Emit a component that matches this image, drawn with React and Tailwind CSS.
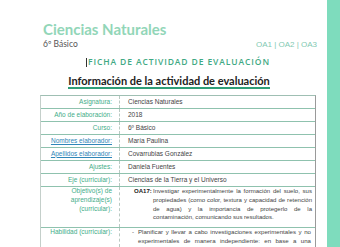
import React from 'react'

const rows = [
  { label: 'Asignatura:', value: 'Ciencias Naturales' },
  { label: 'Año de elaboración:', value: '2018' },
  { label: 'Curso:', value: '6º Básico' },
  { label: 'Nombres elaborador:', value: 'María Paulina', link: true },
  { label: 'Apellidos elaborador:', value: 'Covarrubias González', link: true },
  { label: 'Ajustes:', value: 'Daniela Fuentes' },
  { label: 'Eje (curricular):', value: 'Ciencias de la Tierra y el Universo' },
]

function Label({ children, link }) {
  return (
    <div className="flex items-center justify-end pr-[7px] border-r border-dashed border-[#b9c9c2] text-right">
      <span className={link ? 'text-[#2f86b8] underline' : 'text-[#44ad88]'}>{children}</span>
    </div>
  )
}

export default function App() {
  return (
    <div className="flex w-[340px] h-[247px] overflow-hidden bg-white" style={{ fontFamily: '"Liberation Sans", Arial, sans-serif' }}>
      <div className="flex-1 flex flex-col">
        {/* header */}
        <div className="pl-[43px] pr-[10px] pt-[20px]">
          <div className="text-[15px] leading-[18px] font-bold text-[#92d6b8]" style={{ fontFamily: 'Lato, sans-serif' }}>
            Ciencias Naturales
          </div>
          <div className="flex items-center justify-between mt-[1px] h-[11px]">
            <span className="text-[8.5px] leading-[11px] text-[#555]" style={{ fontFamily: 'Lato, sans-serif' }}>6º Básico</span>
            <span className="text-[8px] leading-[11px] text-[#7fc9b2]">OA1 | OA2 | OA3</span>
          </div>
        </div>

        <div className="flex items-center pl-[86px] mt-[7px] h-[10px]">
          <span className="w-px h-[9px] bg-[#333] mr-[1px]"></span>
          <span className="text-[8.5px] leading-[10px] tracking-[0.9px] font-semibold text-[#3fa984]" style={{ fontFamily: '"Open Sans", sans-serif' }}>
            FICHA DE ACTIVIDAD DE EVALUACIÓN
          </span>
        </div>

        <div className="ml-[68px] mt-[7px] w-[202px] border-b-2 border-[#2f9e78] text-center">
          <div className="text-[11px] leading-[13px] font-bold text-[#222]" style={{ fontFamily: 'Lato, sans-serif' }}>
            Información de la actividad de evaluación
          </div>
        </div>

        {/* table */}
        <div className="ml-[40px] mt-[6px] w-[276px] border-t border-[#9fbfb3] border-l border-l-[#c4cfca] border-l-dashed border-r border-r-[#9a9a9a] text-[6.5px] leading-[8.8px] text-[#444]">
          {rows.map((r) => (
            <div key={r.label} className="grid grid-cols-[79px_1fr] h-[13px] border-b border-[#8fc2ae]">
              <Label link={r.link}>{r.label}</Label>
              <div className="flex items-center pl-[8px]">{r.value}</div>
            </div>
          ))}
          <div className="grid grid-cols-[79px_1fr] h-[41px] border-b border-[#8fc2ae]">
            <div className="flex justify-end pr-[7px] border-r border-dashed border-[#b9c9c2] text-right text-[#44ad88]">
              Objetivo(s) de<br />aprendizaje(s)<br />(curricular):
            </div>
            <div className="flex pl-[14px] pr-[3px] text-[6.05px]">
              <span className="w-[19px] shrink-0 whitespace-nowrap font-bold text-[#222]">OA17:</span>
              <p className="text-justify">
                Investigar experimentalmente la formación del suelo, sus propiedades (como color, textura y capacidad de retención de agua) y la importancia de protegerlo de la contaminación, comunicando sus resultados.
              </p>
            </div>
          </div>
          <div className="grid grid-cols-[79px_1fr]">
            <div className="flex justify-end pr-[7px] border-r border-dashed border-[#b9c9c2] text-right text-[#44ad88]">
              Habilidad (curricular):
            </div>
            <div className="flex pl-[12px] pr-[4px] text-[6.1px]">
              <span className="w-[6px] shrink-0">-</span>
              <span className="text-justify">
                Planificar y llevar a cabo investigaciones experimentales y no experimentales de manera independiente: en base a una pregunta formulada por ellos u otros; identificando variables que se mantienen, que cambian y que son medidas.
              </span>
            </div>
          </div>
        </div>
      </div>
      <div className="w-[13px] h-full bg-[#7edcbd]"></div>
    </div>
  )
}
